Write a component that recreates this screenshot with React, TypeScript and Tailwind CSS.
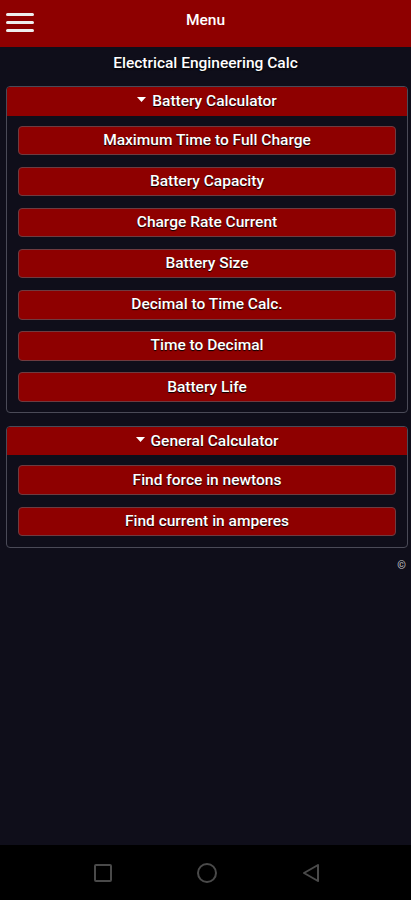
const battery = [
  "Maximum Time to Full Charge",
  "Battery Capacity",
  "Charge Rate Current",
  "Battery Size",
  "Decimal to Time Calc.",
  "Time to Decimal",
  "Battery Life",
];

const general = ["Find force in newtons", "Find current in amperes"];

function Panel({ title, items }: { title: string; items: string[] }) {
  return (
    <div className="ml-[6px] mr-[3px] rounded-[4px] border border-[#4a4a57] overflow-hidden">
      <div className="h-[28.5px] bg-[#8e0000] flex items-center justify-center gap-[6px] text-white text-[15.5px] font-medium [text-shadow:0_1px_1px_#000]">
        <svg width="9" height="6" viewBox="0 0 9 6" className="mt-[-2px]">
          <path d="M0 0h9L4.5 5z" fill="#fff" />
        </svg>
        <span>{title}</span>
      </div>
      <div className="pl-[11px] pr-[11px] pt-[10px] pb-[10.5px] flex flex-col gap-[11.67px]">
        {items.map((t) => (
          <button
            key={t}
            className="h-[29.5px] w-full rounded-[4px] bg-[#8e0000] border border-[#6e3b40] text-white text-[15.5px] font-medium [text-shadow:0_1px_1px_#000]"
          >
            {t}
          </button>
        ))}
      </div>
    </div>
  );
}

export default function App() {
  return (
    <div className="w-[411px] h-[900px] flex flex-col bg-[#0f0e1a] font-['Roboto',sans-serif] overflow-hidden">
      <header className="relative h-[47px] bg-[#8e0000] flex items-center justify-center shrink-0">
        <div className="absolute left-[6px] top-[13px] flex flex-col gap-[5px]">
          <span className="block w-[28px] h-[3px] bg-[#eee] rounded-full" />
          <span className="block w-[28px] h-[3px] bg-[#eee] rounded-full" />
          <span className="block w-[28px] h-[3px] bg-[#eee] rounded-full" />
        </div>
        <span className="text-white text-[15.5px] font-medium mt-[-6px]">Menu</span>
      </header>
      <div className="flex-1 flex flex-col">
        <div className="h-[39px] pb-[5px] flex items-center justify-center text-white text-[15.5px] font-medium [text-shadow:0_1px_2px_#000]">
          Electrical Engineering Calc
        </div>
        <Panel title="Battery Calculator" items={battery} />
        <div className="h-[12.5px]" />
        <Panel title="General Calculator" items={general} />
        <div className="flex justify-end pr-[5px] pt-[10px] text-[#ccc] text-[11px]">©</div>
      </div>
      <nav className="h-[55px] bg-black shrink-0 flex items-center pl-[51px]">
        <div className="w-[104px] flex justify-center">
          <svg width="20" height="20" viewBox="0 0 20 20">
            <rect x="2" y="2" width="16" height="16" rx="1" fill="none" stroke="#4a4a4a" strokeWidth="2" />
          </svg>
        </div>
        <div className="w-[104px] flex justify-center">
          <svg width="22" height="22" viewBox="0 0 22 22">
            <circle cx="11" cy="11" r="9" fill="none" stroke="#4a4a4a" strokeWidth="2" />
          </svg>
        </div>
        <div className="w-[104px] flex justify-center">
          <svg width="20" height="20" viewBox="0 0 20 20">
            <path d="M17 2L3 10l14 8z" fill="none" stroke="#4a4a4a" strokeWidth="2" strokeLinejoin="round" />
          </svg>
        </div>
      </nav>
    </div>
  );
}
